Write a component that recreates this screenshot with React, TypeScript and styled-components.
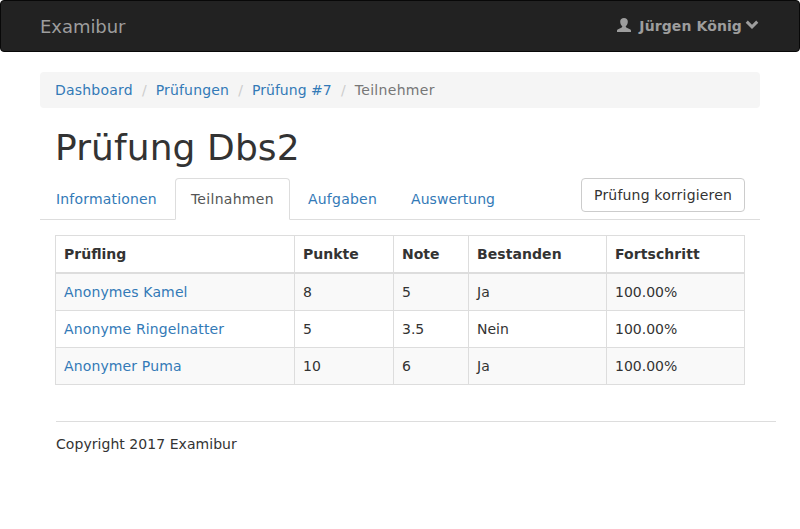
import React from 'react';
import styled, { createGlobalStyle } from 'styled-components';

const GlobalStyle = createGlobalStyle`
  *, *::before, *::after { box-sizing: border-box; }
  body {
    margin: 0;
    font-family: "DejaVu Sans", sans-serif;
    font-size: 14px;
    line-height: 20px;
    color: #333;
    background: #fff;
    overflow: hidden;
  }
  a { color: #337ab7; text-decoration: none; }
`;

const Navbar = styled.nav`
  display: flex;
  align-items: center;
  justify-content: space-between;
  height: 52px;
  padding: 0 40px 0 39px;
  background: #222;
  border: 1px solid #080808;
  border-radius: 4px;
`;

const Brand = styled.a`
  padding-top: 2px;
  font-size: 18px;
  letter-spacing: -0.05px;
  color: #9d9d9d;
`;

const UserMenu = styled.a`
  display: flex;
  align-items: center;
  font-weight: bold;
  letter-spacing: 0.1px;
  color: #9d9d9d;

  svg { margin-bottom: 2px; }
`;

const UserName = styled.span`
  margin: 0 3px 0 8px;
`;

const Container = styled.main`
  width: 720px;
  margin: 20px 40px 0;
`;

const Breadcrumb = styled.ol`
  display: flex;
  margin: 0;
  padding: 8px 15px;
  list-style: none;
  background: #f5f5f5;
  border-radius: 4px;
`;

const Crumb = styled.li<{ $active?: boolean; $tracking: number }>`
  color: ${({ $active }) => ($active ? '#777' : '#337ab7')};
  letter-spacing: ${({ $tracking }) => $tracking}px;
  &:not(:first-child)::before {
    content: '/';
    display: inline-block;
    width: 23px;
    text-align: center;
    letter-spacing: 0;
    color: #ccc;
  }
`;

const Title = styled.h1`
  margin: 20px 15px 10px;
  font-size: 36px;
  font-weight: 400;
  line-height: 40px;
  letter-spacing: 0.1px;
`;

const TabBar = styled.div`
  display: flex;
  justify-content: space-between;
  height: 42px;
  padding: 0 15px 0 0;
  border-bottom: 1px solid #ddd;
`;

const Tabs = styled.div`
  display: flex;
  gap: 2px;
`;

const Tab = styled.a<{ $active?: boolean; $tracking: number }>`
  height: 42px;
  padding: 10px 15px;
  border: 1px solid;
  border-color: ${({ $active }) => ($active ? '#ddd #ddd #fff' : 'transparent')};
  border-radius: 4px 4px 0 0;
  letter-spacing: ${({ $tracking }) => $tracking}px;
  && { color: ${({ $active }) => ($active ? '#555' : '#337ab7')}; }
`;

const Button = styled.button`
  width: 164px;
  height: 34px;
  padding: 6px 0 6px 12px;
  font: inherit;
  text-align: left;
  letter-spacing: 0.19px;
  white-space: nowrap;
  color: #333;
  background: #fff;
  border: 1px solid #ccc;
  border-radius: 4px;
`;

const Table = styled.table`
  width: 690px;
  margin: 15px 15px 0;
  table-layout: fixed;
  border-collapse: collapse;
  border: 1px solid #ddd;
`;

const HeadCell = styled.th`
  padding: 8px;
  text-align: left;
  border: 1px solid #ddd;
  border-bottom-width: 2px;

  &:nth-child(n + 4) { letter-spacing: 0.07px; }
`;

const Row = styled.tr`
  &:nth-child(odd) { background: #f9f9f9; }
`;

const Cell = styled.td`
  padding: 8px;
  border: 1px solid #ddd;
`;

const PersonLink = styled.a`
  letter-spacing: 0.13px;
`;

const Footer = styled.footer`
  width: 720px;
  margin: 36px 0 0 16px;
  padding-top: 12px;
  letter-spacing: 0.05px;
  border-top: 1px solid #ddd;
`;

const UserIcon = () => (
  <svg width="14" height="14" viewBox="0 0 14 14" fill="currentColor" aria-hidden="true">
    <path d="M7 0C4.7 0 3.2 1.3 3.2 3.5C3.2 5.6 4 7.2 5 8.1C5.4 8.5 5.3 9.2 4.7 9.5L1.1 11.3C.3 11.7 0 12.1 0 12.8V14H14V12.8C14 12.1 13.7 11.7 12.9 11.3L9.3 9.5C8.7 9.2 8.6 8.5 9 8.1C10 7.2 10.8 5.6 10.8 3.5C10.8 1.3 9.3 0 7 0Z" />
  </svg>
);

const ChevronIcon = () => (
  <svg width="14" height="14" viewBox="0 0 14 14" fill="currentColor" aria-hidden="true">
    <path d="M2.8 2.6L7 6.8L11.2 2.6L13.3 4.7L7 11L.7 4.7Z" />
  </svg>
);

const columns = [
  { label: 'Prüfling', width: 239 },
  { label: 'Punkte', width: 99 },
  { label: 'Note', width: 75 },
  { label: 'Bestanden', width: 138 },
  { label: 'Fortschritt', width: 138 },
];

const rows = [
  ['Anonymes Kamel', '8', '5', 'Ja', '100.00%'],
  ['Anonyme Ringelnatter', '5', '3.5', 'Nein', '100.00%'],
  ['Anonymer Puma', '10', '6', 'Ja', '100.00%'],
];

export default function App() {
  return (
    <>
      <GlobalStyle />
      <Navbar>
        <Brand href="#">Examibur</Brand>
        <UserMenu href="#">
          <UserIcon />
          <UserName>Jürgen König</UserName>
          <ChevronIcon />
        </UserMenu>
      </Navbar>
      <Container>
        <Breadcrumb>
          <Crumb $tracking={0.2}><a href="#">Dashboard</a></Crumb>
          <Crumb $tracking={0.15}><a href="#">Prüfungen</a></Crumb>
          <Crumb $tracking={0.03}><a href="#">Prüfung #7</a></Crumb>
          <Crumb $tracking={0.3} $active>Teilnehmer</Crumb>
        </Breadcrumb>
        <Title>Prüfung Dbs2</Title>
        <TabBar>
          <Tabs>
            <Tab href="#" $tracking={0.18}>Informationen</Tab>
            <Tab href="#" $tracking={0.3} $active>Teilnahmen</Tab>
            <Tab href="#" $tracking={0.25}>Aufgaben</Tab>
            <Tab href="#" $tracking={0.02}>Auswertung</Tab>
          </Tabs>
          <Button type="button">Prüfung korrigieren</Button>
        </TabBar>
        <Table>
          <colgroup>
            {columns.map((c) => <col key={c.label} width={c.width} />)}
          </colgroup>
          <thead>
            <tr>{columns.map((c) => <HeadCell key={c.label}>{c.label}</HeadCell>)}</tr>
          </thead>
          <tbody>
            {rows.map(([name, ...values]) => (
              <Row key={name}>
                <Cell><PersonLink href="#">{name}</PersonLink></Cell>
                {values.map((v, i) => <Cell key={i}>{v}</Cell>)}
              </Row>
            ))}
          </tbody>
        </Table>
        <Footer>Copyright 2017 Examibur</Footer>
      </Container>
    </>
  );
}
